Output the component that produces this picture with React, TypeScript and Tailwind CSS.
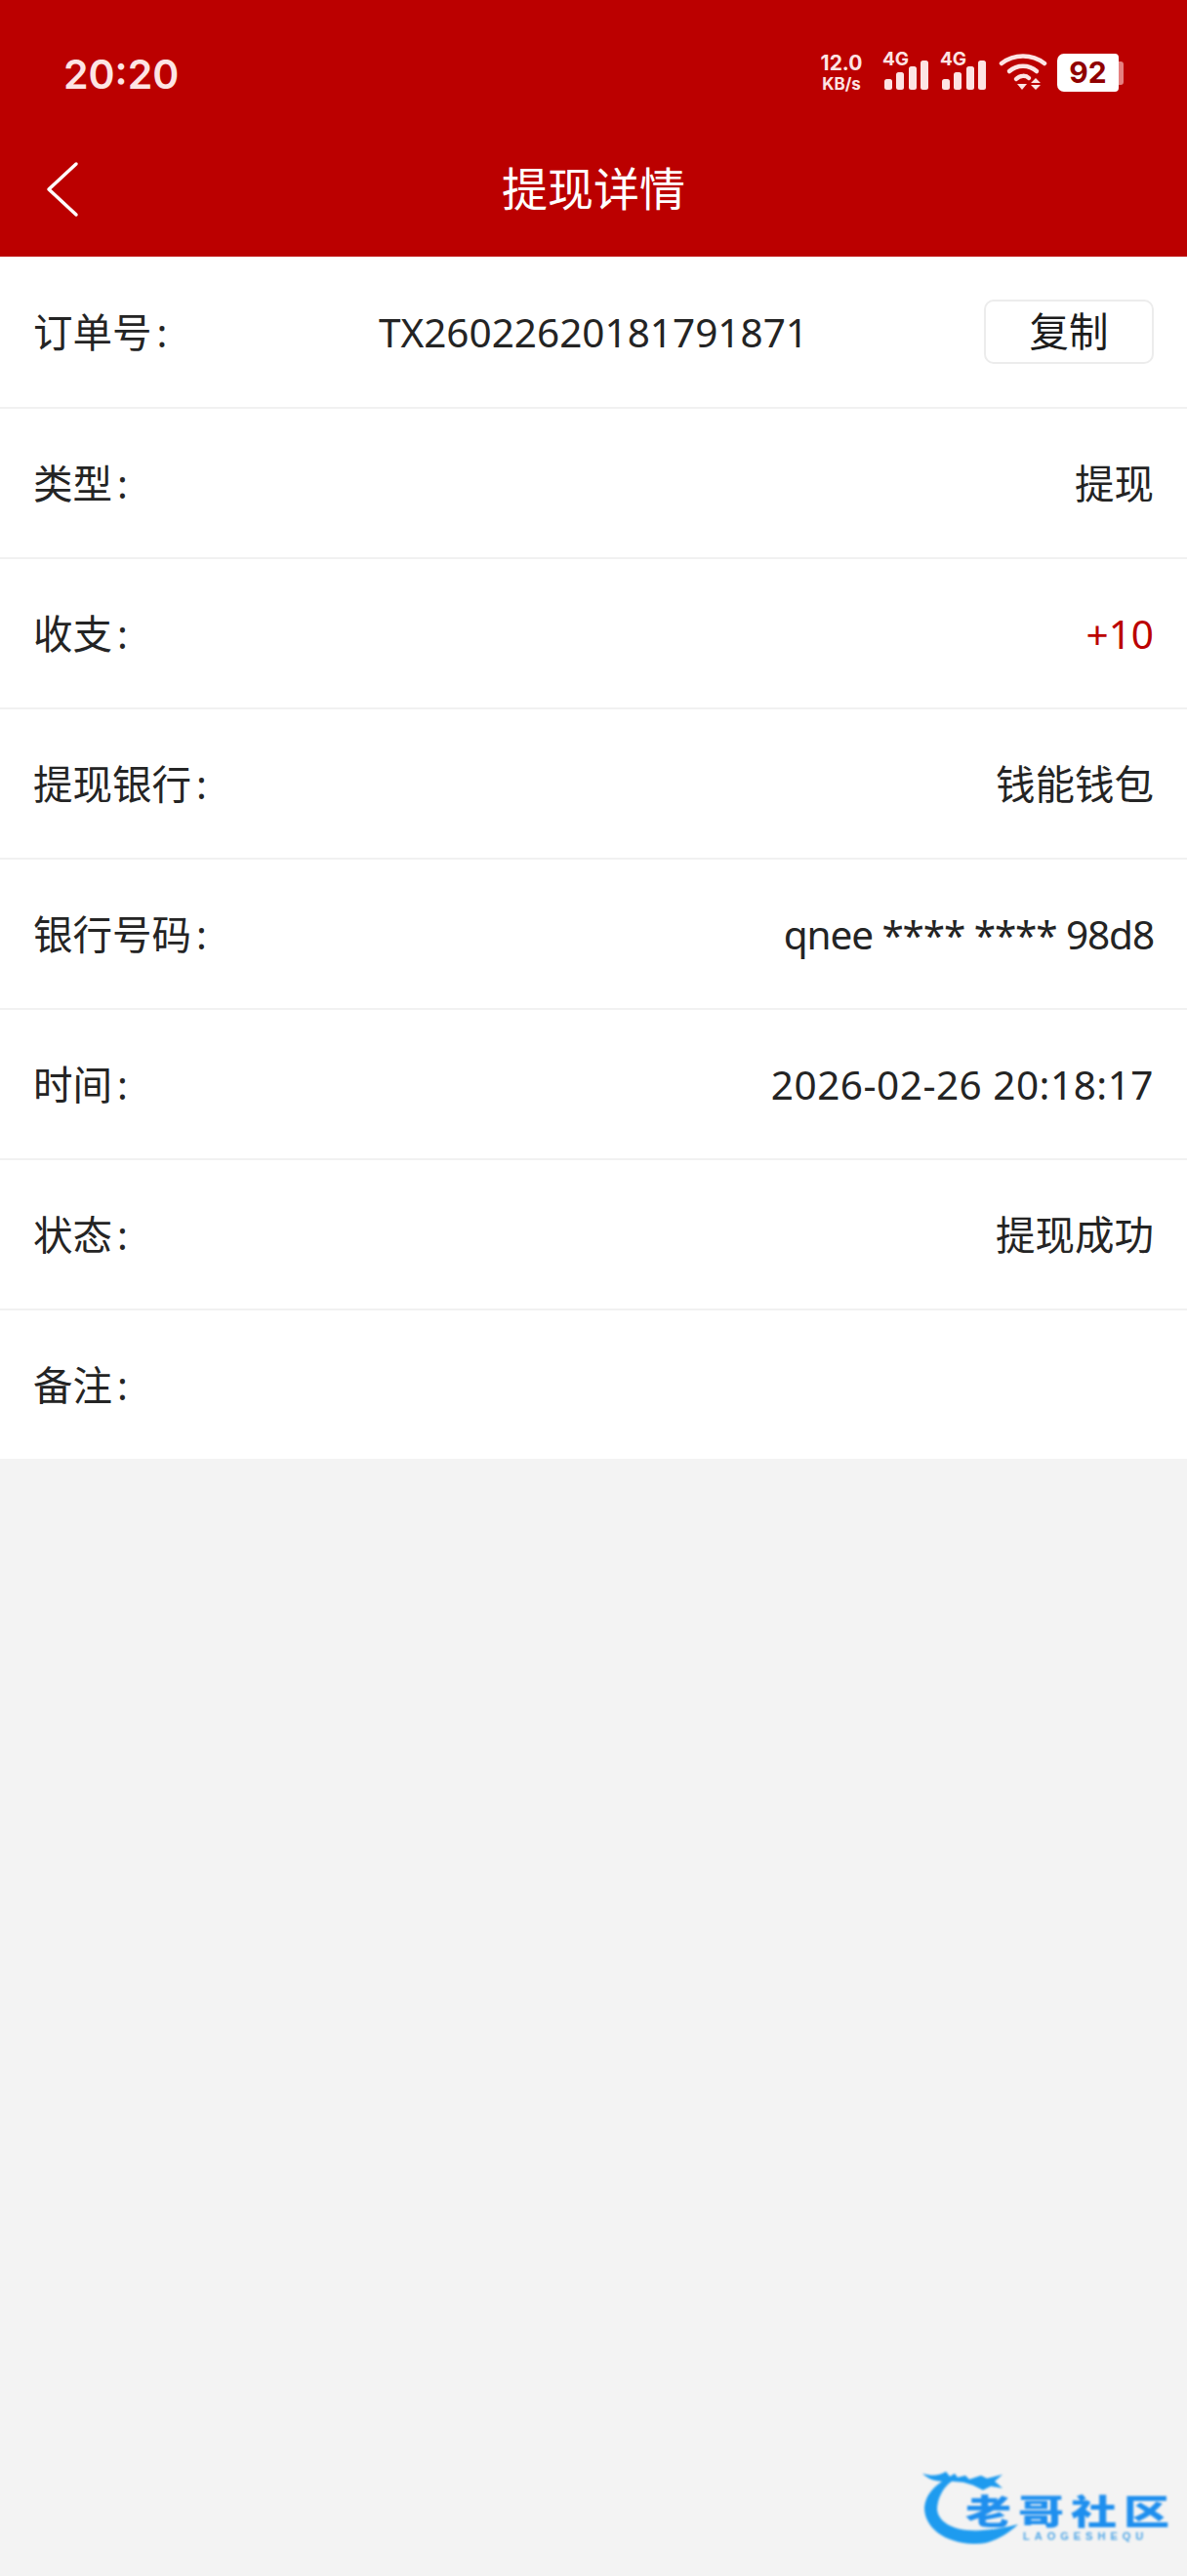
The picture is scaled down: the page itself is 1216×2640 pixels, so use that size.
import React from 'react';

const rows: { label: string; value: string; valueClass?: string }[] = [
  { label: '类型', value: '提现' },
  { label: '收支', value: '+10', valueClass: 'text-[#bb0000]' },
  { label: '提现银行', value: '钱能钱包' },
  { label: '银行号码', value: 'qnee **** **** 98d8', valueClass: 'tracking-[-1.1px]' },
  { label: '时间', value: '2026-02-26 20:18:17', valueClass: 'tracking-[0.5px]' },
  { label: '状态', value: '提现成功' },
];

function Label({ text }: { text: string }) {
  return (
    <span className="flex items-center">
      {text}
      <span className="ml-[5px]">:</span>
    </span>
  );
}

function SignalIcon() {
  return (
    <div className="relative h-[42px] w-[50px]">
      <span className="absolute left-0 top-[-3px] text-[19px] leading-[20px] font-bold text-[#fde4e4] font-['Inter',sans-serif]">4G</span>
      <svg className="absolute left-[2px] top-[8px]" width="46" height="32" viewBox="0 0 46 32" fill="#fde4e4">
        <rect x="0" y="19" width="8" height="11" rx="2.5" />
        <rect x="12" y="12" width="8" height="18" rx="2.5" />
        <rect x="25" y="6" width="8" height="24" rx="2.5" />
        <rect x="37" y="0" width="8" height="30" rx="2.5" />
      </svg>
    </div>
  );
}

function WifiIcon() {
  return (
    <svg width="50" height="42" viewBox="0 0 50 42" fill="none" stroke="#fde4e4" strokeWidth="4.5" strokeLinecap="round">
      <path d="M3 11 C16 1 34 1 47 11" />
      <path d="M11 19 C19 12 31 12 39 19" />
      <path d="M18 27 C22 23 28 23 31 26" />
      <path d="M19 32 H29 L24 38 Z" fill="#fde4e4" stroke="none" />
      <path d="M38 26 L43 31 H33 Z M33 33 H43 L38 38 Z" fill="#fde4e4" stroke="none" />
    </svg>
  );
}

function StatusBar() {
  return (
    <div className="flex h-[126px] items-start justify-between pl-[65px] pr-[65px] pt-[50px]">
      <span className="text-[41px] leading-[52px] font-semibold text-[#fde4e4] font-['Inter',sans-serif]">20:20</span>
      <div className="flex items-center pt-[3px]">
        <div className="mr-[19px] flex w-[46px] flex-col items-center text-[#fde4e4] font-bold font-['Inter',sans-serif]">
          <span className="text-[21px] leading-[24px]">12.0</span>
          <span className="text-[17px] leading-[19px]">KB/s</span>
        </div>
        <SignalIcon />
        <div className="w-[9px]" />
        <SignalIcon />
        <div className="w-[10px]" />
        <WifiIcon />
        <div className="ml-[10px] flex items-center">
          <div className="flex h-[39px] w-[63px] items-center justify-center rounded-l-[7px] rounded-r-[4px] bg-white text-[30px] font-bold text-[#8f0000] font-['Inter',sans-serif]">
            92
          </div>
          <div className="h-[24px] w-[5px] rounded-r-[3px] bg-[#e58080]" />
        </div>
      </div>
    </div>
  );
}

function Watermark() {
  return (
    <div className="absolute bottom-[26px] right-[11px] h-[84px] w-[260px] blur-[1px]">
      <svg className="absolute left-0 top-0" width="100" height="84" viewBox="0 0 100 84">
        {/* dragon head and body curling under the wordmark */}
        <path
          d="M0 5 C10 8 18 7 24 3 L28 8 L33 5 L36 9 L44 7 L48 11 L60 7 L66 10 L82 6 L74 13 L82 20 L70 18 L62 22 L52 17 L42 14 L30 13 C20 20 15 32 15 42 C17 58 40 72 98 57 C84 70 68 78 52 77 C22 76 2 60 2 40 C3 28 10 20 20 13 C12 13 5 10 0 5 Z"
          fill="#1e9bef"
        />
      </svg>
      <span className="absolute left-[44px] top-[22px] origin-center scale-y-75 whitespace-nowrap text-[47px] leading-[40px] font-black tracking-[7px] text-[#1f8fee] font-['Noto_Sans_CJK_SC',sans-serif]">
        老哥社区
      </span>
      <span className="absolute left-[103px] top-[63px] whitespace-nowrap text-[11px] leading-[12px] font-semibold tracking-[5px] text-[#4ea5e6] font-['Liberation_Sans',sans-serif]">
        LAOGESHEQU
      </span>
    </div>
  );
}

export default function App() {
  return (
    <div className="relative h-[2640px] w-[1216px] overflow-hidden bg-[#f3f3f3] font-['Noto_Sans','Noto_Sans_CJK_SC',sans-serif] text-[40.5px] text-[#242424]">
      <div className="h-[263px] bg-[#bb0000]">
        <StatusBar />
        <div className="relative flex h-[137px] items-center justify-center pb-[4px]">
          <svg className="absolute left-[46px] top-[39px]" width="36" height="58" viewBox="0 0 36 58" fill="none" stroke="#fff" strokeWidth="3.5" strokeLinecap="round" strokeLinejoin="round">
            <path d="M32 3 L4 29 L32 55" />
          </svg>
          <span className="text-[47px] leading-[52px] text-white">提现详情</span>
        </div>
      </div>

      <div className="bg-white">
        <div className="relative flex h-[156px] items-center justify-between border-b-2 border-[#f1f1f1] pl-[34px] pr-[34px] pt-[2px]">
          <Label text="订单号" />
          <span className="absolute left-0 right-0 text-center">TX26022620181791871</span>
          <button className="relative mt-[-2px] flex h-[66px] w-[174px] items-center justify-center rounded-[10px] border-2 border-[#ececec] bg-white text-[40.5px] text-[#1c1c1c]">
            复制
          </button>
        </div>
        {rows.map((row) => (
          <div key={row.label} className="flex h-[154px] items-center justify-between border-b-2 border-[#f1f1f1] pl-[34px] pr-[34px] pt-[2px]">
            <Label text={row.label} />
            <span className={row.valueClass}>{row.value}</span>
          </div>
        ))}
        <div className="flex h-[152px] items-center justify-between pl-[34px] pr-[34px] pt-[2px]">
          <Label text="备注" />
        </div>
      </div>

      <Watermark />
    </div>
  );
}
